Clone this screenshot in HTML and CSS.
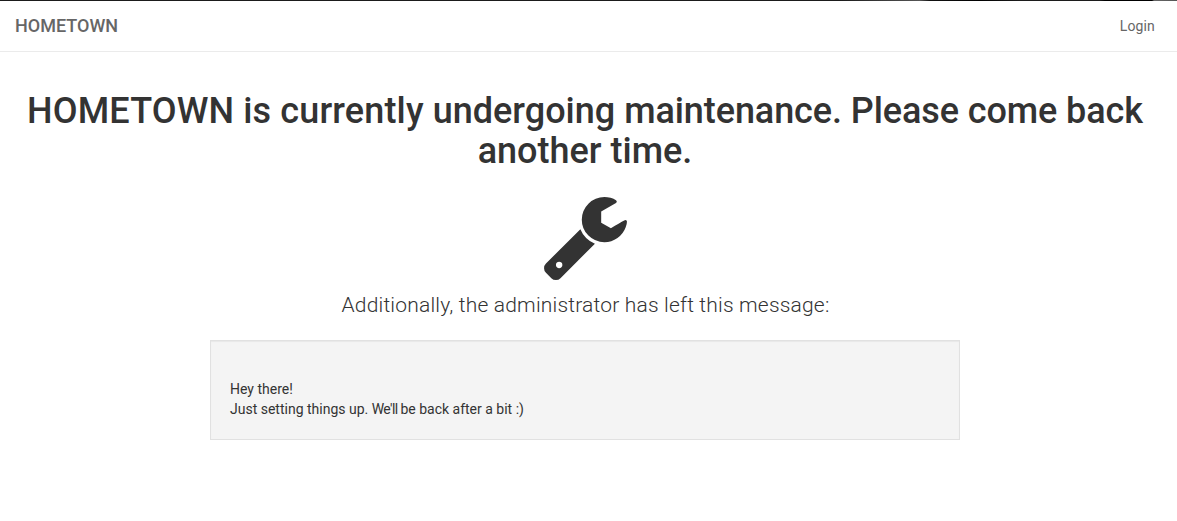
FILE: index.html
```html
<!DOCTYPE html>
<html lang="en">
<head>
<meta charset="utf-8">
<title>HOMETOWN</title>
<link rel="stylesheet" href="styles.css">
</head>
<body>
<nav class="navbar">
  <a class="brand">HOMETOWN</a>
  <a class="login">Login</a>
</nav>
<main class="content">
  <h1 class="title"><span class="loose">HOMETOWN is currently </span>undergoing <span class="snug">maintenance. Please come back</span><br>another time.</h1>
  <svg class="wrench" viewBox="0 0 1641 1643"><path fill="#333" d="M363 1344q0-26-19-45t-45-19-45 19-19 45 19 45 45 19 45-19 19-45zm644-420l-682 682q-37 37-90 37-52 0-91-37L38 1498q-38-36-38-90 0-53 38-91l681-681q39 98 114.500 173.500t173.500 114.500zm634-435q0 39-23 106-47 134-164.500 217.500T1195 896q-185 0-316.500-131.500T747 448t131.500-316.500T1195 0q58 0 121.500 16.500T1424 63q16 11 16 28t-16 28l-293 169v224l193 107q5-3 79-48.500t135.500-81T1609 454q15 0 23.500 10t8.500 25z"/></svg>
  <p class="lead">Additionally, the administrator has left this message:</p>
  <div class="well">Hey there!<br>Just setting things up. <span class="tight">We'll </span>be back after a bit :)</div>
</main>
</body>
</html>
```
FILE: styles.css
```css
* { box-sizing: border-box; }
body {
  margin: 0;
  background: #fff;
  color: #333;
  font: 14px/20px Roboto, sans-serif;
}
.navbar {
  display: flex;
  justify-content: space-between;
  align-items: center;
  height: 52px;
  padding: 1px 22px 0 15px;
  background: linear-gradient(90deg, #1b1b1b 0 840px, #555 920px, #111 930px, #000 980px, #1c1c1c 1020px, #1c1c1c 1100px, #000 1105px, #000 1152px, #666 1154px, #555) top / 100% 1px no-repeat;
  border-bottom: 1px solid #ebebeb;
  color: #666;
}
.brand { font-size: 18px; font-weight: 500; }
.login { letter-spacing: .15px; }
.content {
  display: flex;
  flex-direction: column;
  align-items: center;
  width: 1170px;
  padding: 40px 15px 0;
}
.title {
  margin: 0;
  font-size: 36px;
  line-height: 39.6px;
  font-weight: 500;
  text-align: center;
}
.loose { letter-spacing: .14px; }
.snug { letter-spacing: -.09px; }
.wrench { width: 83px; height: 83px; margin-top: 26px; }
.lead {
  margin: 10px 0 20px;
  padding-left: 1px;
  font-size: 21px;
  line-height: 30px;
  font-weight: 300;
  letter-spacing: .185px;
}
.well {
  width: 750px;
  height: 100px;
  padding: 38px 19px 19px;
  background: #f4f4f4;
  border: 1px solid #e1e1e1;
  box-shadow: inset 0 1px 1px rgba(0, 0, 0, .05);
}
.tight { letter-spacing: -.6px; }
```
